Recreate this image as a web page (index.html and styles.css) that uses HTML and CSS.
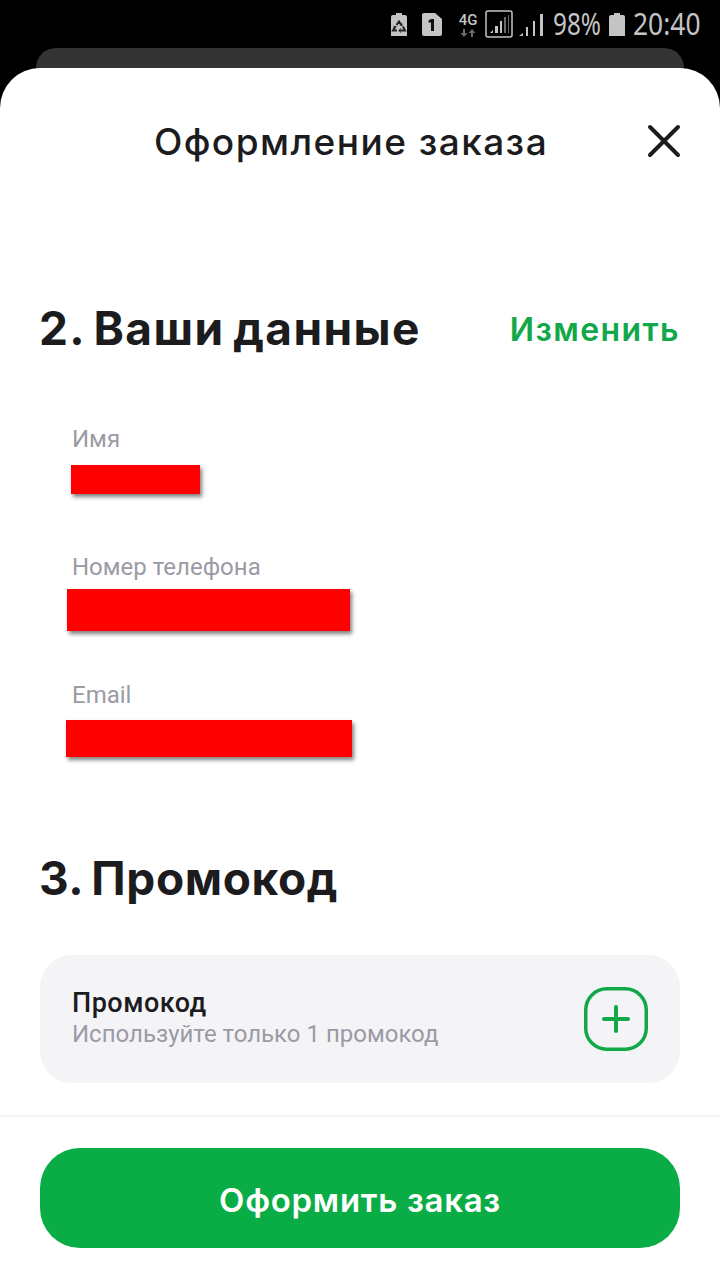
FILE: index.html
```html
<!DOCTYPE html>
<html lang="ru">
<head>
  <meta charset="UTF-8">
  <title>Оформление заказа</title>
  <link rel="stylesheet" href="styles.css">
</head>
<body>

<div class="statusbar">
  <svg class="st-icon recycle" width="16" height="23" viewBox="0 0 16 23">
    <path d="M5 0h6v2h3a2 2 0 0 1 2 2v19H0V4a2 2 0 0 1 2-2h3z" fill="#c4c4c4"/>
    <path d="M5.500 12L8 8.500l2 3M12 13.500l2 4H10M6 17.500H2L4 14" fill="none" stroke="#222" stroke-width="2"/>
    <path d="M11.200 10l.4 3.500-3.200-1.200zM9.800 15v5l-2.600-2.500zM2.500 12.500l3.500 1.200-3 2.200z" fill="#222"/>
  </svg>
  <svg class="st-icon sim" width="20" height="23" viewBox="0 0 20 23">
    <path d="M2 0h11l7 6v15a2 2 0 0 1-2 2H2a2 2 0 0 1-2-2V2a2 2 0 0 1 2-2z" fill="#c4c4c4"/>
    <path d="M9 6h3v12H9V9.500H6.500V7.500z" fill="#111"/>
  </svg>
  <div class="net">
    <span class="net-label">4G</span>
    <svg width="18" height="8" viewBox="0 0 18 8">
      <path d="M4 0h2v4h2.500L5 8 1.500 4H4zM12 8h2V4h2.500L13 0 9.500 4H12z" fill="#6a6a6a"/>
    </svg>
  </div>
  <svg class="st-icon box" width="28" height="28" viewBox="0 0 28 28">
    <rect x="1" y="1" width="26" height="26" rx="2" fill="none" stroke="#c4c4c4" stroke-width="1.500"/>
    <path d="M5 23h3v-3zM10 23h3v-7h-3zM15 23h2V11h-2z" fill="#c4c4c4"/>
    <path d="M19 23h2V7h-2zM23 23h1V5h-1z" fill="#6a6a6a"/>
  </svg>
  <svg class="st-icon bars" width="24" height="22" viewBox="0 0 24 22">
    <path d="M0 22h4v-3zM7 22h2V13H7zM14 22h2V7h-2zM21 22h3V0h-3z" fill="#c4c4c4"/>
  </svg>
  <span class="st-text pct">98%</span>
  <svg class="st-icon batt" width="16" height="23" viewBox="0 0 16 23">
    <path d="M5 0h6v2h3a2 2 0 0 1 2 2v19H0V4a2 2 0 0 1 2-2h3z" fill="#c4c4c4"/>
  </svg>
  <span class="st-text time">20:40</span>
</div>

<div class="back-sheet"></div>

<div class="sheet">
  <div class="sheet-head">
    <h1>Оформление заказа</h1>
    <svg class="close" width="34" height="34" viewBox="0 0 34 34">
      <path d="M3 3l28 28M31 3L3 31" stroke="#1c1c1e" stroke-width="4" stroke-linecap="round"/>
    </svg>
  </div>

  <div class="section-head">
    <h2>2. Ваши данные</h2>
    <a class="edit" href="#">Изменить</a>
  </div>

  <div class="fields">
    <div class="field">
      <div class="field-label">Имя</div>
      <div class="redact redact-name"></div>
    </div>
    <div class="field">
      <div class="field-label">Номер телефона</div>
      <div class="redact redact-phone"></div>
    </div>
    <div class="field">
      <div class="field-label">Email</div>
      <div class="redact redact-email"></div>
    </div>
  </div>

  <h2 class="promo-title">3. Промокод</h2>

  <div class="promo">
    <div class="promo-text">
      <div class="promo-name">Промокод</div>
      <div class="promo-hint">Используйте только 1 промокод</div>
    </div>
    <svg class="plus" width="64" height="64" viewBox="0 0 64 64">
      <rect x="1.750" y="1.750" width="60.500" height="60.500" rx="21" fill="none" stroke="#12a84a" stroke-width="3.500"/>
      <path d="M32 20v24M20 32h24" stroke="#12a84a" stroke-width="4" stroke-linecap="round"/>
    </svg>
  </div>

  <div class="footer">
    <button class="submit">Оформить заказ</button>
  </div>
</div>

</body>
</html>
```

FILE: styles.css
```css
* {
  box-sizing: border-box;
}
html, body {
  margin: 0;
  height: 1280px;
  overflow: hidden;
}
body {
  background: #000;
  color: #1c1c1e;
  font-family: Roboto, sans-serif;
}

/* status bar */
.statusbar {
  height: 48px;
  display: flex;
  align-items: center;
  justify-content: flex-end;
  padding-right: 21px;
  color: #c4c4c4;
}
.st-icon {
  display: block;
}
.sim {
  margin-left: 15px;
}
.box {
  margin-left: 7px;
}
.bars {
  margin-left: 6px;
  margin-top: 2px;
}
.batt {
  margin-left: 9px;
}
.net {
  margin-left: 16px;
  display: flex;
  flex-direction: column;
  align-items: center;
  width: 20px;
}
.net-label {
  font-size: 15px;
  line-height: 16px;
  font-weight: 500;
}
.net svg {
  display: block;
  margin-top: 1px;
}
.st-text {
  font-family: "Noto Sans", sans-serif;
  font-size: 30px;
  line-height: 36px;
  white-space: nowrap;
  transform-origin: left center;
}
.pct {
  width: 47px;
  margin-left: 10px;
  transform: scaleX(0.81);
}
.time {
  width: 66px;
  margin-left: 8px;
  transform: scaleX(0.88);
}

.back-sheet {
  height: 40px;
  margin: 0 36px -20px;
  background: #343434;
  border-radius: 20px 20px 0 0;
}

/* sheet */
.sheet {
  position: relative;
  height: 1212px;
  background: #fff;
  border-radius: 40px 40px 0 0;
  padding: 0 40px;
}
.sheet-head {
  height: 146px;
  display: flex;
  align-items: center;
  justify-content: center;
  padding-right: 18px;
  position: relative;
}
h1 {
  margin: 0;
  font-family: Inter, sans-serif;
  font-size: 37px;
  font-weight: 500;
  letter-spacing: 1.45px;
  color: #1c1c1e;
}
.close {
  position: absolute;
  right: -1px;
  top: 56px;
}
h2 {
  margin: 0 0 0 -1px;
  font-family: Inter, sans-serif;
  font-size: 46px;
  font-weight: 700;
  letter-spacing: 0.6px;
  word-spacing: -3px;
  line-height: 54px;
  color: #1c1c1e;
}
.section-head {
  margin-top: 87px;
  display: flex;
  align-items: center;
  justify-content: space-between;
}
.section-head h2 {
  letter-spacing: 1.4px;
  word-spacing: -3.5px;
}
.edit {
  padding-top: 3px;
  font-family: Inter, sans-serif;
  font-size: 32px;
  font-weight: 600;
  letter-spacing: 1.4px;
  color: #12a84a;
  text-decoration: none;
}

/* fields */
.fields {
  margin-top: 70px;
  padding-left: 32px;
}
.field {
  height: 128px;
}
.field-label {
  font-size: 24px;
  line-height: 28px;
  color: #9b9ba5;
}
.redact {
  background: #f00;
  box-shadow: 2px 3px 4px rgba(0, 0, 0, 0.5);
}
.redact-name {
  width: 129px;
  height: 29px;
  margin: 12px 0 0 -1px;
}
.redact-phone {
  width: 283px;
  height: 42px;
  margin: 8px 0 0 -5px;
}
.redact-email {
  width: 286px;
  height: 37px;
  margin: 11px 0 0 -6px;
}

.promo-title {
  margin-top: 42px;
}

/* promo card */
.promo {
  margin-top: 50px;
  height: 128px;
  background: #f4f4f7;
  border-radius: 32px;
  display: flex;
  align-items: center;
  justify-content: space-between;
  padding: 0 32px;
}
.promo-name {
  font-size: 27px;
  letter-spacing: 0.5px;
  line-height: 31px;
  font-weight: 500;
  color: #1c1c1e;
}
.promo-hint {
  font-size: 24px;
  line-height: 31px;
  color: #9b9ba5;
}
.plus {
  display: block;
}

/* bottom bar */
.footer {
  position: absolute;
  left: 0;
  right: 0;
  bottom: 0;
  height: 165px;
  padding: 31px 40px 0;
  background: #fff;
  border-top: 2px solid #f4f4f7;
}
.submit {
  display: block;
  width: 100%;
  height: 100px;
  padding-top: 4px;
  border: none;
  border-radius: 40px;
  background: #0aad45;
  color: #fff;
  font-family: Inter, sans-serif;
  font-size: 33px;
  font-weight: 600;
  letter-spacing: 0.7px;
}
```
